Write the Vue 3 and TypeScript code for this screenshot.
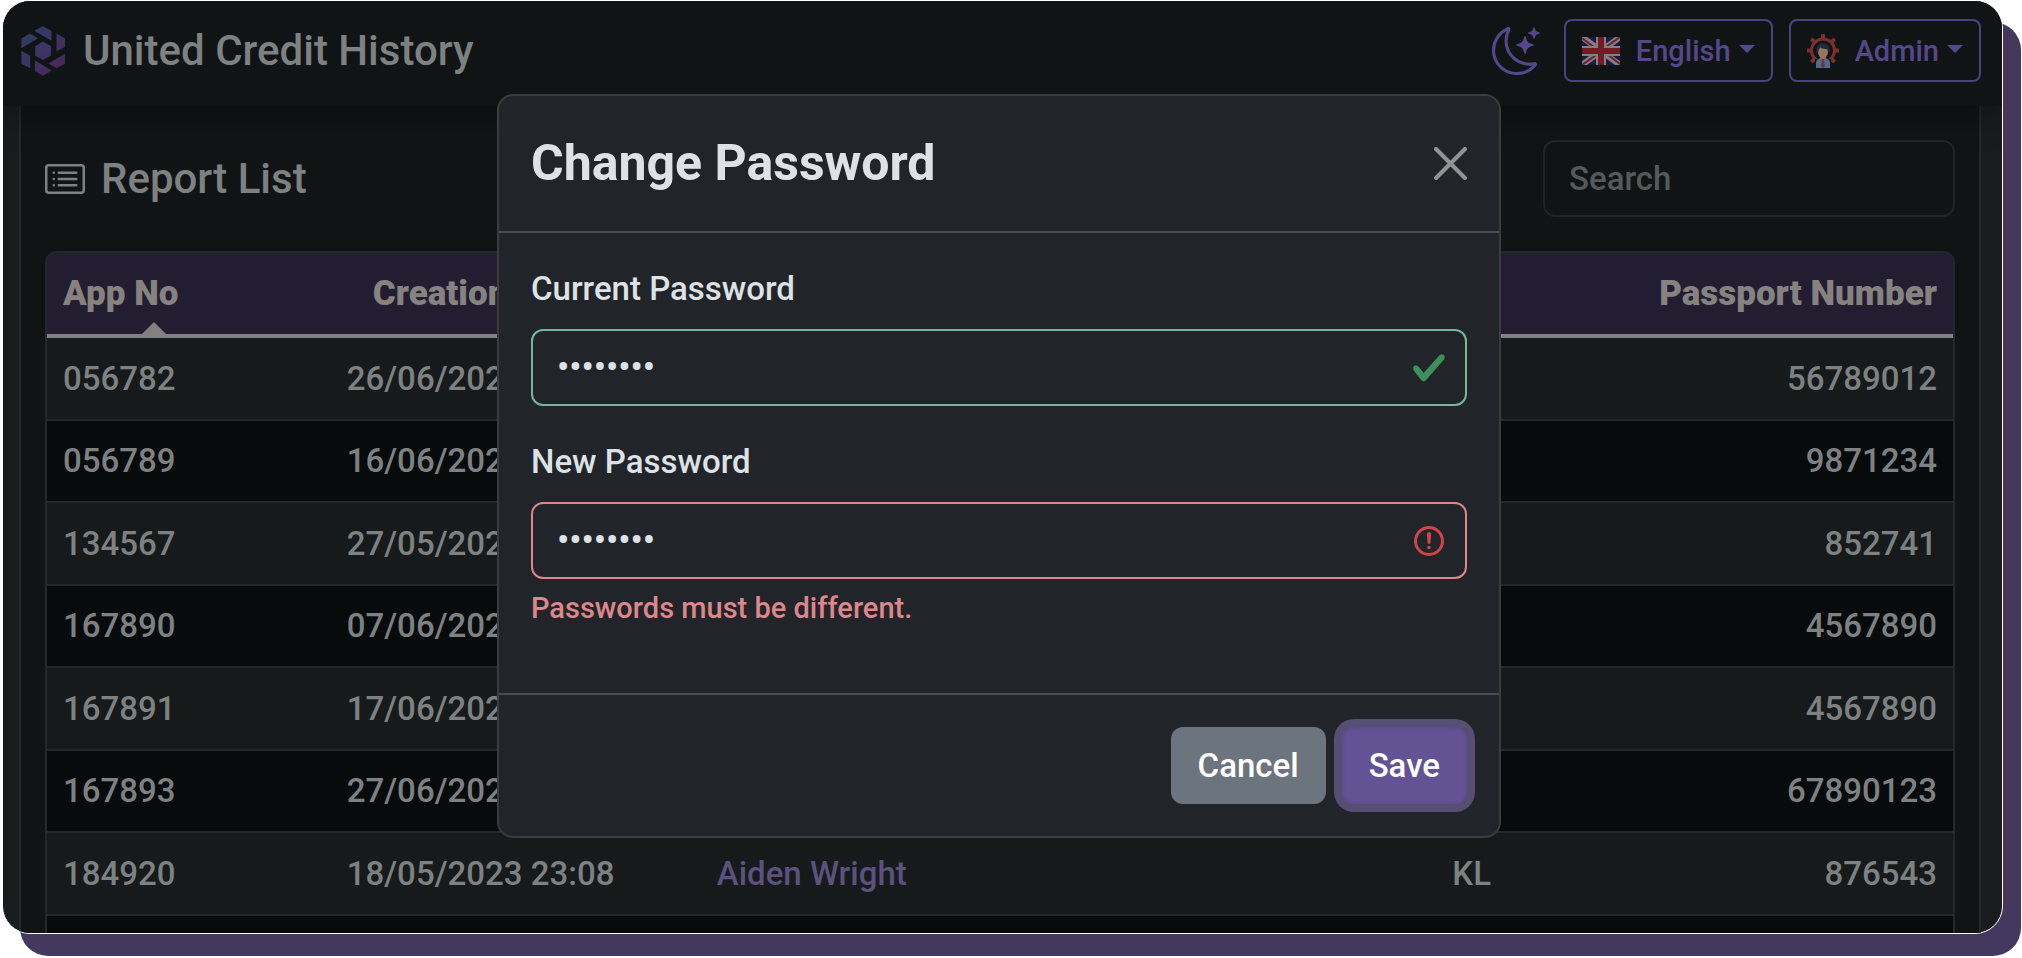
<script setup lang="ts">
import { ref } from 'vue'

interface Report {
  appNo: string
  created: string
  name: string
  country: string
  passport: string
}

const reports: Report[] = [
  { appNo: '056782', created: '26/06/2023 10:24', name: '', country: '', passport: '56789012' },
  { appNo: '056789', created: '16/06/2023 10:24', name: '', country: '', passport: '9871234' },
  { appNo: '134567', created: '27/05/2023 11:24', name: '', country: '', passport: '852741' },
  { appNo: '167890', created: '07/06/2023 10:24', name: '', country: '', passport: '4567890' },
  { appNo: '167891', created: '17/06/2023 10:24', name: '', country: '', passport: '4567890' },
  { appNo: '167893', created: '27/06/2023 10:24', name: '', country: '', passport: '67890123' },
  { appNo: '184920', created: '18/05/2023 23:08', name: 'Aiden Wright', country: 'KL', passport: '876543' },
  { appNo: '', created: '', name: '', country: '', passport: '' },
]

const search = ref('')
const currentPassword = ref('password')
const newPassword = ref('password')
const gearTeeth = [0, 45, 90, 135, 180, 225, 270, 315]
</script>

<template>
  <div class="page">
    <div class="window">
      <header class="navbar">
        <a class="brand" href="#">
          <svg class="brand-logo" viewBox="0 0 130 148" aria-hidden="true">
            <defs>
              <linearGradient id="brand-fill" x1="10" y1="20" x2="110" y2="140" gradientUnits="userSpaceOnUse">
                <stop offset="0" stop-color="#303c60" />
                <stop offset="0.5" stop-color="#3d3463" />
                <stop offset="1" stop-color="#4a2559" />
              </linearGradient>
            </defs>
            <g fill="url(#brand-fill)">
              <path d="M39 14 65 1 90 15V44z" />
              <path d="M105 22 130 37V62L105 75z" />
              <path d="M65 46 89 60V87L65 101 42 87V60z" />
              <path d="M26 22 50 36 1 66V37z" />
              <path d="M1 74 27 88V125L1 112z" />
              <path d="M81 111 130 82V112L105 125z" />
              <path d="M41 102 91 132 65 147 41 133z" />
            </g>
          </svg>
          <span>United Credit History</span>
        </a>
        <div class="nav-actions">
          <button class="theme-toggle" type="button" aria-label="Dark theme">
            <svg viewBox="0 0 16 16" aria-hidden="true">
              <path d="M6 .278a.77.77 0 0 1 .08.858 7.2 7.2 0 0 0-.878 3.46c0 4.021 3.278 7.277 7.318 7.277q.792-.001 1.533-.16a.79.79 0 0 1 .81.316.73.73 0 0 1-.031.893A8.35 8.35 0 0 1 8.344 16C3.734 16 0 12.286 0 7.71 0 4.266 2.114 1.312 5.124.06A.75.75 0 0 1 6 .278M4.858 1.311A7.27 7.27 0 0 0 1.025 7.71c0 4.02 3.279 7.276 7.319 7.276a7.32 7.32 0 0 0 5.205-2.162q-.506.063-1.029.063c-4.61 0-8.343-3.714-8.343-8.29 0-1.167.242-2.278.681-3.286" />
              <path d="M10.794 3.148a.217.217 0 0 1 .412 0l.387 1.162c.173.518.579.924 1.097 1.097l1.162.387a.217.217 0 0 1 0 .412l-1.162.387a1.73 1.73 0 0 0-1.097 1.097l-.387 1.162a.217.217 0 0 1-.412 0l-.387-1.162A1.73 1.73 0 0 0 9.31 6.593l-1.162-.387a.217.217 0 0 1 0-.412l1.162-.387a1.73 1.73 0 0 0 1.097-1.097zM13.863.099a.145.145 0 0 1 .274 0l.258.774c.115.346.386.617.732.732l.774.258a.145.145 0 0 1 0 .274l-.774.258a1.16 1.16 0 0 0-.732.732l-.258.774a.145.145 0 0 1-.274 0l-.258-.774a1.16 1.16 0 0 0-.732-.732l-.774-.258a.145.145 0 0 1 0-.274l.774-.258c.346-.115.617-.386.732-.732z" />
            </svg>
          </button>
          <button class="menu-button" type="button">
            <svg class="flag" viewBox="0 0 38 28" aria-hidden="true">
              <path fill="#151a48" d="M0 0h38v28H0z" />
              <path stroke="#817f80" stroke-width="6" d="M0 0 38 28M38 0 0 28" />
              <path stroke="#761e29" stroke-width="2" d="M0 1 17 14M38 0 21 12M38 27 21 14M0 28 17 16" />
              <path stroke="#817f80" stroke-width="10" d="M19 0V28M0 14H38" />
              <path stroke="#741a25" stroke-width="6" d="M19 0V28M0 14H38" />
            </svg>
            <span>English</span>
            <i class="caret"></i>
          </button>
          <button class="menu-button" type="button">
            <svg class="avatar" viewBox="0 0 32 34" aria-hidden="true">
              <g fill="#7d2f2e">
                <rect
                  v-for="angle in gearTeeth"
                  :key="angle"
                  x="14"
                  y="0"
                  width="4"
                  height="7"
                  rx="1"
                  :transform="`rotate(${angle} 16 16.5)`"
                />
              </g>
              <circle cx="16" cy="16.500" r="11.500" fill="#111314" stroke="#7d2f2e" stroke-width="3" />
              <path fill="#111415" d="M8 25h16v9H8z" />
              <path fill="#4a6d96" d="M9 34v-5q0-4 5-5h4q5 1 5 5v5z" />
              <path fill="#8a6a57" d="M13 20h6v5l-3 2-3-2z" />
              <ellipse cx="16" cy="18" rx="5" ry="6" fill="#99765f" />
              <path fill="#1c2e37" d="M9 19q0-10 7-10 7 0 7 10l-3-4q-5 0-7-2-1 4-4 6z" />
              <path fill="#822d31" d="m15 25h2l1 7-2 2-2-2z" />
            </svg>
            <span>Admin</span>
            <i class="caret"></i>
          </button>
        </div>
      </header>

      <main class="content">
        <section class="panel">
          <div class="panel-head">
            <h1 class="panel-title">
              <svg viewBox="0 0 16 16" aria-hidden="true">
                <path d="M14.5 3a.5.5 0 0 1 .5.5v9a.5.5 0 0 1-.5.5h-13a.5.5 0 0 1-.5-.5v-9a.5.5 0 0 1 .5-.5zm-13-1A1.5 1.5 0 0 0 0 3.5v9A1.5 1.5 0 0 0 1.500 14h13a1.5 1.5 0 0 0 1.500-1.500v-9A1.5 1.5 0 0 0 14.500 2z" />
                <path d="M5 8a.5.5 0 0 1 .5-.5h7a.5.5 0 0 1 0 1h-7A.5.5 0 0 1 5 8m0-2.500a.5.5 0 0 1 .5-.5h7a.5.5 0 0 1 0 1h-7a.5.5 0 0 1-.5-.5m0 5a.5.5 0 0 1 .5-.5h7a.5.5 0 0 1 0 1h-7a.5.5 0 0 1-.5-.5m-1-5a.5.5 0 1 1-1 0 .5.5 0 0 1 1 0M4 8a.5.5 0 1 1-1 0 .5.5 0 0 1 1 0m0 2.500a.5.5 0 1 1-1 0 .5.5 0 0 1 1 0" />
              </svg>
              <span>Report List</span>
            </h1>
            <input v-model="search" class="search" type="search" placeholder="Search" aria-label="Search" />
          </div>

          <div class="table-frame">
            <table class="reports">
              <colgroup>
                <col class="col-app" />
                <col class="col-date" />
                <col class="col-name" />
                <col class="col-country" />
                <col class="col-passport" />
              </colgroup>
              <thead>
                <tr>
                  <th class="sorted" scope="col" aria-sort="ascending">App No</th>
                  <th class="center" scope="col">Creation Date</th>
                  <th scope="col"></th>
                  <th scope="col"></th>
                  <th class="right" scope="col">Passport Number</th>
                </tr>
              </thead>
              <tbody>
                <tr v-for="(report, index) in reports" :key="index">
                  <td>{{ report.appNo }}</td>
                  <td class="center">{{ report.created }}</td>
                  <td><a v-if="report.name" href="#">{{ report.name }}</a></td>
                  <td class="right">{{ report.country }}</td>
                  <td class="right">{{ report.passport }}</td>
                </tr>
              </tbody>
            </table>
          </div>
        </section>
      </main>
    </div>

    <div class="modal-layer">
      <form class="modal" role="dialog" aria-labelledby="modal-title" @submit.prevent>
        <div class="modal-header">
          <h2 id="modal-title">Change Password</h2>
          <button class="close" type="button" aria-label="Close">
            <svg viewBox="0 0 32 32" aria-hidden="true">
              <path d="M2 2 30 30M30 2 2 30" fill="none" stroke="currentColor" stroke-width="4" stroke-linecap="round" />
            </svg>
          </button>
        </div>
        <div class="modal-body">
          <div class="field">
            <label for="current-password">Current Password</label>
            <div class="control valid">
              <input id="current-password" v-model="currentPassword" type="password" autocomplete="off" />
              <svg viewBox="0 0 8 8" aria-hidden="true">
                <path fill="#3f8f5c" d="M2.3 6.73.6 4.53c-.4-1.04.46-1.4 1.1-.8l1.1 1.4 3.4-3.8c.6-.63 1.6-.27 1.2.7l-4 4.6c-.43.5-.8.4-1.1.1z" />
              </svg>
            </div>
          </div>
          <div class="field">
            <label for="new-password">New Password</label>
            <div class="control invalid">
              <input id="new-password" v-model="newPassword" type="password" autocomplete="off" aria-describedby="password-error" />
              <svg viewBox="0 0 12 12" fill="none" stroke="#d04347" aria-hidden="true">
                <circle cx="6" cy="6" r="4.500" />
                <path stroke-linejoin="round" d="M5.800 3.600h.4L6 6.500z" />
                <circle cx="6" cy="8.200" r=".6" fill="#d04347" stroke="none" />
              </svg>
            </div>
            <p id="password-error" class="error">Passwords must be different.</p>
          </div>
        </div>
        <div class="modal-footer">
          <button class="btn cancel" type="button">Cancel</button>
          <button class="btn save" type="submit">Save</button>
        </div>
      </form>
    </div>
  </div>
</template>

<style>
body {
  margin: 0;
  background: #fff;
}
</style>

<style scoped>
* {
  box-sizing: border-box;
}

.page {
  position: relative;
  display: flex;
  height: 100vh;
  padding: 0 19px 24px 2px;
  overflow: hidden;
  font-family: Roboto, "Liberation Sans", sans-serif;
  font-size: 33px;
  font-weight: 500;
  line-height: 48px;
  color: #7e8182;
}

button,
input {
  margin: 0;
  font: inherit;
}

.window {
  display: flex;
  flex: 1;
  flex-direction: column;
  min-width: 0;
  overflow: hidden;
  border: 1px solid #fff;
  border-radius: 28px;
  background: #191c1d;
  box-shadow: 18px 22px 0 #45385f;
}

.navbar {
  position: relative;
  display: flex;
  flex: none;
  align-items: center;
  justify-content: space-between;
  padding: 18px 21px 24px 18px;
  background: #111415;
  box-shadow: 0 8px 32px rgba(0, 0, 0, 0.4);
}

.brand {
  display: flex;
  align-items: center;
  gap: 18px;
  font-size: 42px;
  color: #7e8182;
  text-decoration: none;
}

.brand-logo {
  width: 44px;
  height: 50px;
}

.nav-actions {
  display: flex;
  align-items: center;
  gap: 16px;
}

.theme-toggle {
  display: flex;
  margin-right: 8px;
  padding: 0;
  border: 0;
  background: none;
}

.theme-toggle svg {
  width: 48px;
  height: 48px;
  fill: #54478a;
}

.menu-button {
  display: flex;
  align-items: center;
  height: 63px;
  padding: 0 16px;
  border: 2px solid #4d4080;
  border-radius: 8px;
  background: none;
  font-size: 29px;
  color: #54478a;
}

.flag {
  width: 38px;
  height: 28px;
  margin-right: 16px;
}

.avatar {
  width: 32px;
  height: 34px;
  margin-right: 16px;
}

.caret {
  margin: 0 0 4px 8px;
  border: 8px solid transparent;
  border-top-color: #54478a;
  border-bottom: 0;
}

.content {
  display: flex;
  flex: 1;
  min-height: 0;
  padding: 0 21px 0 16px;
}

.panel {
  flex: 1;
  min-width: 0;
  padding: 34px 24px 0;
  border: 2px solid #25282a;
  border-width: 0 2px;
  background: #111415;
}

.panel-head {
  display: flex;
  align-items: center;
  justify-content: space-between;
  margin-bottom: 34px;
}

.panel-title {
  display: flex;
  align-items: center;
  gap: 16px;
  margin: 0;
  font-size: 42px;
  font-weight: 500;
  color: #7e8182;
}

.panel-title svg {
  width: 40px;
  height: 40px;
  fill: currentColor;
}

.search {
  position: relative;
  width: 412px;
  height: 77px;
  padding: 0 24px;
  border: 2px solid #212426;
  border-radius: 12px;
  outline: 0;
  appearance: none;
  background: transparent;
  color: #7e8182;
}

.search::placeholder {
  color: #555959;
  opacity: 1;
}

.table-frame {
  overflow: hidden;
  border: 2px solid #25282a;
  border-radius: 12px 12px 0 0;
}

.reports {
  width: 100%;
  border-collapse: separate;
  border-spacing: 0;
  table-layout: fixed;
}

.col-app {
  width: 11.2%;
}

.col-date {
  width: 23.1%;
}

.col-name {
  width: 31%;
}

.col-country {
  width: 11.3%;
}

th {
  position: relative;
  height: 85px;
  padding: 0 16px;
  border-bottom: 4px solid #838080;
  background: #231d31;
  font-size: 35px;
  font-weight: 900;
  text-align: left;
  color: #85827f;
}

.sorted::after {
  position: absolute;
  bottom: 0;
  left: calc(50% - 12px);
  border: 12px solid transparent;
  border-top: 0;
  border-bottom-color: #838080;
  content: "";
}

td {
  height: 82px;
  padding: 0 16px;
  border-bottom: 2px solid #25282a;
  background: #080b0c;
}

tbody tr:nth-child(odd) td {
  height: 83px;
  background: #171a1b;
}

.center {
  text-align: center;
}

.right {
  text-align: right;
}

td a {
  color: #5b507e;
  text-decoration: none;
}

.modal-layer {
  position: absolute;
  inset: 0;
  display: flex;
  align-items: flex-start;
  justify-content: center;
  padding: 94px 24px 0 0;
}

.modal {
  width: 100%;
  max-width: 1004px;
  border: 2px solid #3a3c3f;
  border-radius: 16px;
  background: #212529;
  color: #dee2e6;
}

.modal-header {
  display: flex;
  align-items: center;
  justify-content: space-between;
  padding: 32px;
  border-bottom: 2px solid #494c50;
}

.modal-header h2 {
  margin: 0;
  font-size: 50px;
  font-weight: 700;
  line-height: 71px;
}

.close {
  display: flex;
  padding: 0;
  border: 0;
  background: none;
  color: #909294;
}

.close svg {
  width: 33px;
  height: 33px;
}

.modal-body {
  padding: 32px 32px 64px;
}

.field + .field {
  margin-top: 32px;
}

.field label {
  display: block;
  margin-bottom: 16px;
}

.control {
  display: flex;
  align-items: center;
  height: 77px;
  padding-right: 18px;
  border: 2px solid #75b798;
  border-radius: 12px;
}

.control.invalid {
  border-color: #dc868d;
}

.control input {
  flex: 1;
  min-width: 0;
  height: 100%;
  padding: 0 24px;
  border: 0;
  outline: 0;
  background: none;
  font-size: 35px;
  color: inherit;
}

.control svg {
  width: 36px;
  height: 36px;
}

.error {
  margin: 8px 0 0;
  font-size: 29px;
  line-height: 42px;
  color: #dd868b;
}

.modal-footer {
  display: flex;
  justify-content: flex-end;
  gap: 16px;
  padding: 32px;
  border-top: 2px solid #494c50;
}

.btn {
  height: 77px;
  padding: 0 27px;
  border: 0;
  border-radius: 12px;
  color: #fff;
}

.cancel {
  background: #6c757d;
}

.save {
  background: #635394;
  box-shadow: 0 0 0 8px #574e73, inset 0 1px 4px rgba(60, 45, 110, 0.3);
}
</style>
